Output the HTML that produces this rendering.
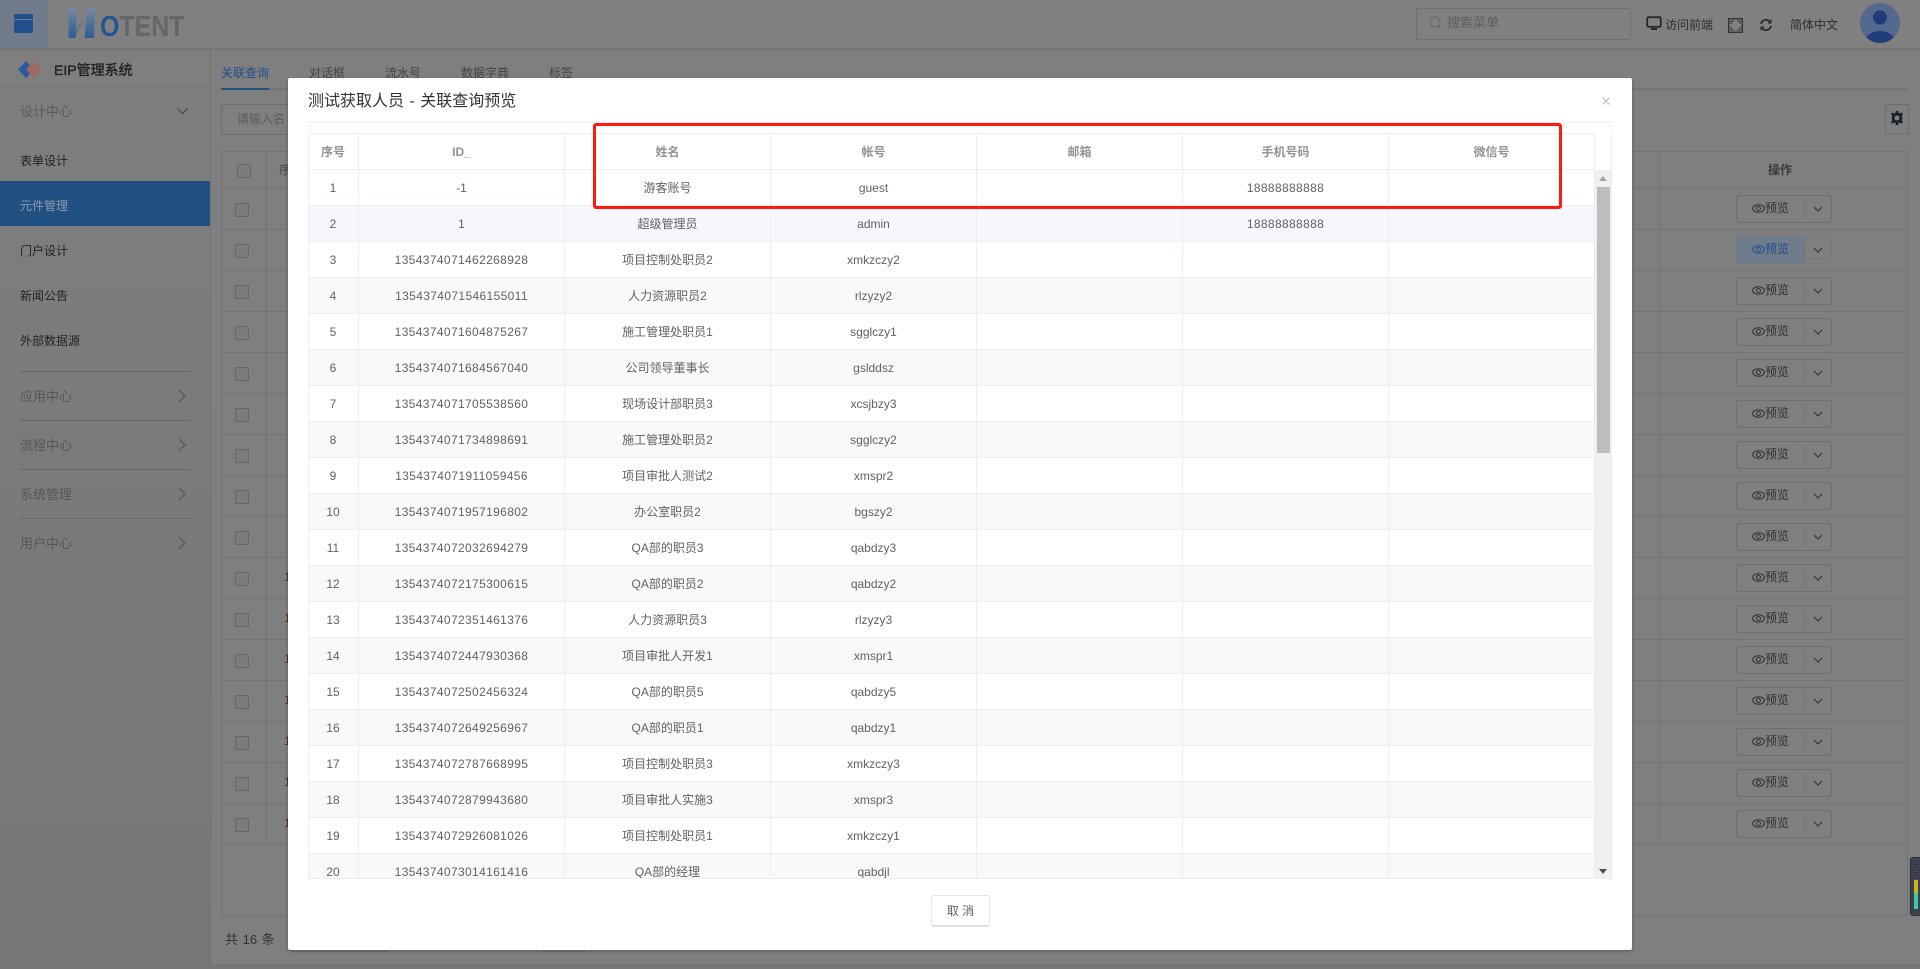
<!DOCTYPE html>
<html lang="zh"><head><meta charset="utf-8"><title>关联查询预览</title>
<style>
*{box-sizing:border-box}
html,body{margin:0;padding:0;width:1920px;height:969px;overflow:hidden;background:#808080;font:12px "Liberation Sans","Noto Sans CJK SC",sans-serif}
.a{position:absolute;white-space:nowrap}
.line{position:absolute;background:#737478}
.bg{position:absolute;left:0;top:0;width:1920px;height:969px;overflow:hidden;background:#7f7f7f}
.btn{position:absolute;left:1736px;width:96px;height:28px;border:1px solid #6e6f73;border-radius:3px;color:#303030;line-height:25px;padding-left:15px;background:#7f7f7f}
.btn svg.e{position:absolute;left:15px;top:8px}
.btn span{position:absolute;left:28px;top:0}
.btn i{position:absolute;left:67px;top:4px;width:1px;height:18px;background:#727272}
.btn svg.c{position:absolute;left:76px;top:10px}
.cb{position:absolute;left:235px;width:14px;height:14px;border:1px solid #66676b;border-radius:2px;background:#7c7c7c}
.r1{position:absolute;left:284px;line-height:17px;color:#4a3a1a}
.m{position:absolute;left:288px;top:78px;width:1344px;height:872px;background:#fff;box-shadow:0 1px 3px rgba(0,0,0,.3);border-radius:2px}
.tw{position:absolute;left:20px;top:55px;width:1304px;height:746px;overflow:hidden;border:1px solid #ebeef5;border-top:0}
table{border-collapse:collapse;table-layout:fixed;width:1287px;color:#606266;position:absolute;left:-2px;top:0}
th,td{border:1px solid #ebeef5;text-align:center;padding:0;height:36px;font-weight:400;font-size:12px;white-space:nowrap;overflow:hidden}
th{color:#8f9297;font-weight:700;height:36px}
tr:nth-child(even) td{background:#f9f9f9}
tr.h td{background:#f5f7fa!important}
td.n{letter-spacing:.36px}
</style></head><body>
<svg width="0" height="0" style="position:absolute"><defs>
<linearGradient id="lg" x1="0" y1="0" x2="0" y2="1"><stop offset="0" stop-color="#76899f"/><stop offset="1" stop-color="#2d5c97"/></linearGradient>
<symbol id="eye" viewBox="0 0 13 9"><ellipse cx="6.5" cy="4.5" rx="5.8" ry="3.8" fill="none" stroke="currentColor"/><circle cx="6.5" cy="4.5" r="2" fill="none" stroke="currentColor"/></symbol>
<symbol id="chev" viewBox="0 0 10 6"><path d="M1 1l4 4 4-4" fill="none" stroke="currentColor"/></symbol>
<symbol id="chr" viewBox="0 0 8 14"><path d="M1 1l6 6-6 6" fill="none" stroke="#5f6062" stroke-width="1.6"/></symbol>
</defs></svg>
<div class="bg">
<!-- top bar -->
<div class="a" style="left:0;top:0;width:1920px;height:50px;background:#808080;border-bottom:2px solid #757575"></div>
<div class="a" style="left:0;top:0;width:48px;height:48px;background:#6f7b8b"></div>
<div class="a" style="left:14px;top:14px;width:19px;height:19px;background:#22508f;border-radius:1px"></div>
<div class="a" style="left:14px;top:19px;width:19px;height:1px;background:#6f7b8b"></div>
<svg class="a" style="left:66px;top:6px" width="36" height="33" viewBox="0 0 36 33"><path d="M2.500 1.500h8.500L10 26C13 19 16 14.500 21 11.500V2h8l-.3 6.700C31 8 33 7.500 34 7.500 32 8.500 30 9.300 28.700 10L28 32h-9.500l1.800-19C15 17 11 24 9.500 32H2.500z" fill="url(#lg)"/></svg>
<div class="a" style="left:100px;top:13px;font:bold 29px/29px 'Liberation Sans',sans-serif;transform:scaleX(.86);transform-origin:0 0;color:#666"><span style="color:#235595">O</span>TENT</div>
<div class="a" style="left:1416px;top:8px;width:215px;height:32px;border:1px solid #6f6f6f;border-radius:3px"></div>
<svg class="a" style="left:1428px;top:15px" width="14" height="16" viewBox="0 0 14 16"><circle cx="7" cy="7" r="5" fill="none" stroke="#656565"/><path d="M10.5 11l2 2.5" stroke="#656565"/></svg>
<div class="a" style="left:1447px;top:14px;font-size:13px;line-height:18px;color:#5f5f5f">搜索菜单</div>
<svg class="a" style="left:1646px;top:16px" width="16" height="15" viewBox="0 0 16 15"><rect x="1.2" y="1.2" width="13.6" height="9.6" rx="1.3" fill="none" stroke="#282828" stroke-width="1.8"/><path d="M5 12h6v2H5z" fill="#282828"/></svg>
<div class="a" style="left:1665px;top:17px;line-height:17px;color:#2d2d2d">访问前端</div>
<svg class="a" style="left:1728px;top:18px" width="15" height="15" viewBox="0 0 15 15"><rect x=".7" y=".7" width="13.6" height="13.6" fill="none" stroke="#333" stroke-width="1.4"/><path d="M3 6V3h3M9 3h3v3M12 9v3H9M6 12H3V9" fill="none" stroke="#333"/></svg>
<svg class="a" style="left:1759px;top:18px" width="14" height="14" viewBox="0 0 14 14"><path d="M2 6a5 5 0 0 1 9-2M12 8a5 5 0 0 1-9 2" fill="none" stroke="#2a2a2a" stroke-width="1.8"/><path d="M12.500 1v4.500h-4zM1.500 13V8.500h4z" fill="#2a2a2a"/></svg>
<div class="a" style="left:1790px;top:17px;line-height:17px;color:#2d2d2d">简体中文</div>
<svg class="a" style="left:1860px;top:3px" width="40" height="40" viewBox="0 0 40 40"><circle cx="20" cy="20" r="20" fill="#54688e"/><circle cx="20" cy="14.500" r="7" fill="#203b7a"/><clipPath id="av"><circle cx="20" cy="20" r="20"/></clipPath><ellipse cx="20" cy="37" rx="14" ry="9" fill="#203b7a" clip-path="url(#av)"/></svg>
<!-- sidebar -->
<div class="a" style="left:0;top:50px;width:211px;height:919px;background:linear-gradient(#7f7f7f,#767676);border-right:1px solid #727272"></div>
<svg class="a" style="left:18px;top:61px" width="24" height="17" viewBox="0 0 24 17"><path d="M8 0l8 8.500-8 8.500L0 8.500z" fill="#2a5a9e"/><path d="M15.500 0L24 8.500 15.500 17 8 8.500z" fill="#a0695f"/></svg>
<div class="a" style="left:54px;top:61px;font-size:14px;line-height:18px;color:#1f1f1f;-webkit-text-stroke:.35px #1f1f1f">EIP管理系统</div>
<div class="line" style="left:0;top:86px;width:210px;height:1px"></div>
<div class="a" style="left:20px;top:103px;font-size:13px;line-height:18px;color:#5b5b5b">设计中心</div>
<svg class="a" style="left:176px;top:107px;color:#4f5052" width="13" height="8"><use href="#chev"/></svg>
<div class="a" style="left:20px;top:153px;line-height:17px;color:#222">表单设计</div>
<div class="a" style="left:0;top:181px;width:210px;height:45px;background:#215083"></div>
<div class="a" style="left:20px;top:198px;line-height:17px;color:#8c9bae">元件管理</div>
<div class="a" style="left:20px;top:243px;line-height:17px;color:#222">门户设计</div>
<div class="a" style="left:20px;top:288px;line-height:17px;color:#222">新闻公告</div>
<div class="a" style="left:20px;top:333px;line-height:17px;color:#222">外部数据源</div>
<div class="line" style="left:20px;top:371px;width:170px;height:1px;background:#686868"></div>
<div class="a" style="left:20px;top:388px;font-size:13px;line-height:18px;color:#565656">应用中心</div>
<svg class="a" style="left:178px;top:389px" width="8" height="14"><use href="#chr"/></svg>
<div class="line" style="left:20px;top:420px;width:170px;height:1px;background:#686868"></div>
<div class="a" style="left:20px;top:437px;font-size:13px;line-height:18px;color:#565656">流程中心</div>
<svg class="a" style="left:178px;top:438px" width="8" height="14"><use href="#chr"/></svg>
<div class="line" style="left:20px;top:469px;width:170px;height:1px;background:#686868"></div>
<div class="a" style="left:20px;top:486px;font-size:13px;line-height:18px;color:#565656">系统管理</div>
<svg class="a" style="left:178px;top:487px" width="8" height="14"><use href="#chr"/></svg>
<div class="line" style="left:20px;top:518px;width:170px;height:1px;background:#686868"></div>
<div class="a" style="left:20px;top:535px;font-size:13px;line-height:18px;color:#565656">用户中心</div>
<svg class="a" style="left:178px;top:536px" width="8" height="14"><use href="#chr"/></svg>
<!-- tabs -->
<div class="line" style="left:221px;top:88px;width:1687px;height:2px;background:#747479"></div>
<div class="a" style="left:221px;top:88px;width:48px;height:2px;background:#215083"></div>
<div class="a" style="left:221px;top:65px;line-height:17px;color:#1f4f8f">关联查询</div>
<div class="a" style="left:309px;top:65px;line-height:17px;color:#444">对话框</div>
<div class="a" style="left:385px;top:65px;line-height:17px;color:#444">流水号</div>
<div class="a" style="left:461px;top:65px;line-height:17px;color:#444">数据字典</div>
<div class="a" style="left:549px;top:65px;line-height:17px;color:#444">标签</div>
<div class="a" style="left:221px;top:104px;width:120px;height:31px;border:1px solid #6d6e72;border-radius:2px"></div>
<div class="a" style="left:237px;top:111px;line-height:17px;color:#5c5c5c">请输入名</div>
<div class="a" style="left:1885px;top:104px;width:24px;height:30px;border:1px solid #6d6e72"></div>
<svg class="a" style="left:1890px;top:111px" width="14" height="14" viewBox="0 0 16 16"><circle cx="8" cy="8" r="4.500" fill="none" stroke="#18222c" stroke-width="3.200"/><path d="M6.500 0h3v3h-3zM6.500 13h3v3h-3zM1 3.500l2-2 2 2-2 2zM11 3.500l2-2 2 2-2 2zM1 12.500l2-2 2 2-2 2zM11 12.500l2-2 2 2-2 2z" fill="#18222c"/></svg>
<!-- bg table -->
<div class="a" style="left:221px;top:151px;width:1687px;height:765px;border:1px solid #727378;background:#7f7f7f"></div>
<div class="line" style="left:266px;top:151px;width:1px;height:693px"></div>
<div class="line" style="left:1659px;top:151px;width:1px;height:693px"></div>
<div class="a" style="left:221px;top:188px;width:1687px;height:657px;background:repeating-linear-gradient(#727378 0 1px,transparent 1px 41px)"></div>
<div class="a" style="left:279px;top:162px;line-height:17px;color:#444">序</div>
<div class="a" style="left:1768px;top:162px;line-height:17px;color:#3a3a3a;font-weight:700">操作</div>
<div class="r1" style="top:569px">1</div><div class="r1" style="top:610px">1</div><div class="r1" style="top:651px">1</div><div class="r1" style="top:692px">1</div><div class="r1" style="top:733px">1</div><div class="r1" style="top:774px">1</div><div class="r1" style="top:815px">1</div>
<div class="cb" style="left:237px;top:164px"></div>
<div class="cb" style="top:203px"></div><div class="cb" style="top:244px"></div><div class="cb" style="top:285px"></div><div class="cb" style="top:326px"></div><div class="cb" style="top:367px"></div><div class="cb" style="top:408px"></div><div class="cb" style="top:449px"></div><div class="cb" style="top:490px"></div><div class="cb" style="top:531px"></div><div class="cb" style="top:572px"></div><div class="cb" style="top:613px"></div><div class="cb" style="top:654px"></div><div class="cb" style="top:695px"></div><div class="cb" style="top:736px"></div><div class="cb" style="top:777px"></div><div class="cb" style="top:818px"></div>
<div class="btn" style="top:195px"><svg class="e" width="13" height="9"><use href="#eye"/></svg><span>预览</span><i></i><svg class="c" width="10" height="6"><use href="#chev"/></svg></div>
<div class="btn" style="top:236px;background:linear-gradient(90deg,#6f7c8c 0 68px,transparent 68px);border-color:#6f7a88;color:#1f4f8f"><svg class="e" width="13" height="9"><use href="#eye"/></svg><span>预览</span><i></i><svg class="c" style="color:#303030" width="10" height="6"><use href="#chev"/></svg></div>
<div class="btn" style="top:277px"><svg class="e" width="13" height="9"><use href="#eye"/></svg><span>预览</span><i></i><svg class="c" width="10" height="6"><use href="#chev"/></svg></div>
<div class="btn" style="top:318px"><svg class="e" width="13" height="9"><use href="#eye"/></svg><span>预览</span><i></i><svg class="c" width="10" height="6"><use href="#chev"/></svg></div>
<div class="btn" style="top:359px"><svg class="e" width="13" height="9"><use href="#eye"/></svg><span>预览</span><i></i><svg class="c" width="10" height="6"><use href="#chev"/></svg></div>
<div class="btn" style="top:400px"><svg class="e" width="13" height="9"><use href="#eye"/></svg><span>预览</span><i></i><svg class="c" width="10" height="6"><use href="#chev"/></svg></div>
<div class="btn" style="top:441px"><svg class="e" width="13" height="9"><use href="#eye"/></svg><span>预览</span><i></i><svg class="c" width="10" height="6"><use href="#chev"/></svg></div>
<div class="btn" style="top:482px"><svg class="e" width="13" height="9"><use href="#eye"/></svg><span>预览</span><i></i><svg class="c" width="10" height="6"><use href="#chev"/></svg></div>
<div class="btn" style="top:523px"><svg class="e" width="13" height="9"><use href="#eye"/></svg><span>预览</span><i></i><svg class="c" width="10" height="6"><use href="#chev"/></svg></div>
<div class="btn" style="top:564px"><svg class="e" width="13" height="9"><use href="#eye"/></svg><span>预览</span><i></i><svg class="c" width="10" height="6"><use href="#chev"/></svg></div>
<div class="btn" style="top:605px"><svg class="e" width="13" height="9"><use href="#eye"/></svg><span>预览</span><i></i><svg class="c" width="10" height="6"><use href="#chev"/></svg></div>
<div class="btn" style="top:646px"><svg class="e" width="13" height="9"><use href="#eye"/></svg><span>预览</span><i></i><svg class="c" width="10" height="6"><use href="#chev"/></svg></div>
<div class="btn" style="top:687px"><svg class="e" width="13" height="9"><use href="#eye"/></svg><span>预览</span><i></i><svg class="c" width="10" height="6"><use href="#chev"/></svg></div>
<div class="btn" style="top:728px"><svg class="e" width="13" height="9"><use href="#eye"/></svg><span>预览</span><i></i><svg class="c" width="10" height="6"><use href="#chev"/></svg></div>
<div class="btn" style="top:769px"><svg class="e" width="13" height="9"><use href="#eye"/></svg><span>预览</span><i></i><svg class="c" width="10" height="6"><use href="#chev"/></svg></div>
<div class="btn" style="top:810px"><svg class="e" width="13" height="9"><use href="#eye"/></svg><span>预览</span><i></i><svg class="c" width="10" height="6"><use href="#chev"/></svg></div>
<!-- pagination -->
<div class="a" style="left:225px;top:931px;font-size:13px;line-height:18px;color:#333;word-spacing:1px">共 16 条</div>
<div class="a" style="left:291px;top:935px;width:98px;height:17px;border:1px solid #6d6e72;border-radius:2px"></div>
<div class="a" style="left:541px;top:935px;width:46px;height:17px;border:1px solid #6d6e72;border-radius:2px"></div>
<div class="a" style="left:210px;top:964px;width:1710px;height:5px;background:#767676"></div>
<!-- device widget -->
<div class="a" style="left:1910px;top:857px;width:10px;height:59px;background:#3a4050;border-radius:3px 0 0 3px;border:1px solid #2a2f3a;border-right:0"></div>
<div class="a" style="left:1914px;top:864px;width:4px;height:16px;background:repeating-linear-gradient(#2d2f36 0 1px,#4a4d55 1px 2px)"></div>
<div class="a" style="left:1914px;top:880px;width:4px;height:13px;background:#c8b81e"></div>
<div class="a" style="left:1914px;top:893px;width:4px;height:16px;background:#3fc9a0"></div>
</div>
<!-- modal -->
<div class="m">
<div class="a" style="left:20px;top:13px;font-size:16px;line-height:22px;color:#333;word-spacing:1px">测试获取人员 - 关联查询预览</div>
<svg class="a" style="left:1314px;top:19px" width="8" height="8" viewBox="0 0 8 8"><path d="M.5.5l7 7M7.500.5l-7 7" stroke="#b4b6bb" stroke-width="1"/></svg>
<div class="a" style="left:20px;top:44px;width:1304px;height:1px;background:#ebeef5"></div>
<div class="tw">
<table><colgroup><col style="width:51px"><col style="width:206px"><col style="width:206px"><col style="width:206px"><col style="width:206px"><col style="width:206px"><col style="width:206px"></colgroup>
<thead><tr><th>序号</th><th>ID_</th><th>姓名</th><th>帐号</th><th>邮箱</th><th>手机号码</th><th>微信号</th></tr></thead>
<tbody>
<tr><td>1</td><td>-1</td><td>游客账号</td><td>guest</td><td></td><td class="n">18888888888</td><td></td></tr>
<tr class="h"><td>2</td><td>1</td><td>超级管理员</td><td>admin</td><td></td><td class="n">18888888888</td><td></td></tr>
<tr><td>3</td><td class="n">1354374071462268928</td><td>项目控制处职员2</td><td>xmkzczy2</td><td></td><td></td><td></td></tr>
<tr><td>4</td><td class="n">1354374071546155011</td><td>人力资源职员2</td><td>rlzyzy2</td><td></td><td></td><td></td></tr>
<tr><td>5</td><td class="n">1354374071604875267</td><td>施工管理处职员1</td><td>sgglczy1</td><td></td><td></td><td></td></tr>
<tr><td>6</td><td class="n">1354374071684567040</td><td>公司领导董事长</td><td>gslddsz</td><td></td><td></td><td></td></tr>
<tr><td>7</td><td class="n">1354374071705538560</td><td>现场设计部职员3</td><td>xcsjbzy3</td><td></td><td></td><td></td></tr>
<tr><td>8</td><td class="n">1354374071734898691</td><td>施工管理处职员2</td><td>sgglczy2</td><td></td><td></td><td></td></tr>
<tr><td>9</td><td class="n">1354374071911059456</td><td>项目审批人测试2</td><td>xmspr2</td><td></td><td></td><td></td></tr>
<tr><td>10</td><td class="n">1354374071957196802</td><td>办公室职员2</td><td>bgszy2</td><td></td><td></td><td></td></tr>
<tr><td>11</td><td class="n">1354374072032694279</td><td>QA部的职员3</td><td>qabdzy3</td><td></td><td></td><td></td></tr>
<tr><td>12</td><td class="n">1354374072175300615</td><td>QA部的职员2</td><td>qabdzy2</td><td></td><td></td><td></td></tr>
<tr><td>13</td><td class="n">1354374072351461376</td><td>人力资源职员3</td><td>rlzyzy3</td><td></td><td></td><td></td></tr>
<tr><td>14</td><td class="n">1354374072447930368</td><td>项目审批人开发1</td><td>xmspr1</td><td></td><td></td><td></td></tr>
<tr><td>15</td><td class="n">1354374072502456324</td><td>QA部的职员5</td><td>qabdzy5</td><td></td><td></td><td></td></tr>
<tr><td>16</td><td class="n">1354374072649256967</td><td>QA部的职员1</td><td>qabdzy1</td><td></td><td></td><td></td></tr>
<tr><td>17</td><td class="n">1354374072787668995</td><td>项目控制处职员3</td><td>xmkzczy3</td><td></td><td></td><td></td></tr>
<tr><td>18</td><td class="n">1354374072879943680</td><td>项目审批人实施3</td><td>xmspr3</td><td></td><td></td><td></td></tr>
<tr><td>19</td><td class="n">1354374072926081026</td><td>项目控制处职员1</td><td>xmkzczy1</td><td></td><td></td><td></td></tr>
<tr><td>20</td><td class="n">1354374073014161416</td><td>QA部的经理</td><td>qabdjl</td><td></td><td></td><td></td></tr>
</tbody></table>
<div class="a" style="left:1285px;top:37px;width:18px;height:709px;background:#f0f0f0;border-left:1px solid #ebeef5"></div>
<div class="a" style="left:1288px;top:54px;width:13px;height:266px;background:#bdbdbd"></div>
<div class="a" style="left:1290px;top:43px;width:0;height:0;border:4px solid transparent;border-top:0;border-bottom:5px solid #a3a3a3"></div>
<div class="a" style="left:1290px;top:736px;width:0;height:0;border:4px solid transparent;border-bottom:0;border-top:5px solid #505050"></div>
<div class="a" style="left:1285px;top:0;width:1px;height:37px;background:#ebeef5"></div>
</div>
<div class="a" style="left:643px;top:817px;width:59px;height:32px;border:1px solid #e4e6ec;border-bottom:2px solid #dcdfe6;border-radius:3px;background:#fff;color:#606266;text-align:center;line-height:30px">取 消</div>
</div>
<!-- red annotation -->
<div class="a" style="left:593px;top:123px;width:969px;height:86px;border:3.500px solid #ff1a10;border-radius:3px"></div>
</body></html>
